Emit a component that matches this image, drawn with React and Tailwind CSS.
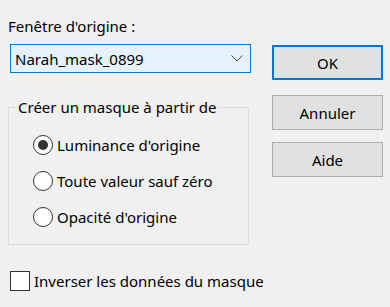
export default function App() {
  const radios = [
    { label: "Luminance d'origine", checked: true },
    { label: "Toute valeur sauf zéro", checked: false },
    { label: "Opacité d'origine", checked: false },
  ];
  return (
    <div className="w-[390px] h-[307px] bg-[#f0f0f0] flex text-[15px] leading-[20px] text-black font-['Segoe_UI','Noto_Sans',sans-serif]">
      <div className="w-[249px] ml-[8px] flex flex-col">
        <div className="mt-[16px] h-[20px] whitespace-nowrap">Fenêtre d'origine :</div>
        <div className="mt-[8px] ml-[2px] w-[241px] h-[29px] border border-[#0078d7] bg-[#e5f1fb] flex items-center pl-[4px] pr-[7px]">
          <span className="flex-1">Narah_mask_0899</span>
          <svg width="12" height="7" viewBox="0 0 12 7" className="block shrink-0">
            <path d="M0.5 0.5 L6 6 L11.5 0.5" fill="none" stroke="#444" strokeWidth="1" />
          </svg>
        </div>
        <div className="relative mt-[34px] w-[241px] h-[138px] border border-[#dcdcdc]">
          <span className="absolute left-[7px] top-[-11px] bg-[#f0f0f0] px-[2px] whitespace-nowrap">
            Créer un masque à partir de
          </span>
          <div className="flex flex-col gap-[16px] pt-[27px] pl-[24px]">
            {radios.map((r) => (
              <div key={r.label} className="flex items-center h-[20px] whitespace-nowrap">
                <span className="shrink-0 w-[20px] h-[20px] rounded-full border border-[#333] bg-white flex items-center justify-center">
                  {r.checked && <span className="w-[10px] h-[10px] rounded-full bg-[#333]" />}
                </span>
                <span className="ml-[4px]">{r.label}</span>
              </div>
            ))}
          </div>
        </div>
        <div className="mt-[26px] ml-[2px] flex items-center h-[20px] whitespace-nowrap">
          <span className="shrink-0 w-[20px] h-[20px] border border-[#333] bg-white" />
          <span className="ml-[4px]">Inverser les données du masque</span>
        </div>
      </div>
      <div className="ml-[15px] w-[111px] shrink-0 flex flex-col">
        <button className="mt-[45px] h-[35px] w-full border-2 border-[#0078d7] bg-[#e1e1e1]">OK</button>
        <button className="mt-[15px] h-[35px] w-full border border-[#adadad] bg-[#e1e1e1]">Annuler</button>
        <button className="mt-[12px] h-[35px] w-full border border-[#adadad] bg-[#e1e1e1]">Aide</button>
      </div>
    </div>
  );
}
